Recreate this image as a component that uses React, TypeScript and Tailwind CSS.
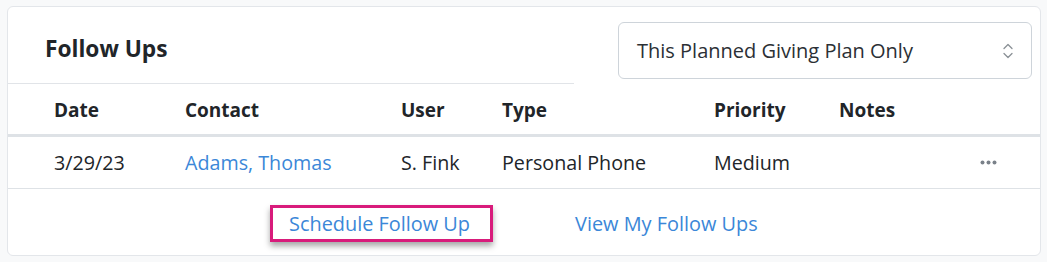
import React from 'react';

const font = { fontFamily: '"Open Sans", "Noto Sans", Arial, sans-serif' };

const App = () => {
  return (
    <div className="w-[1047px] h-[262px] bg-[#f8f9fa] pt-[6px] pl-[7px]" style={font}>
      <div className="w-[1034px] h-[250px] bg-white border border-[#e3e6ea] rounded-[6px] flex flex-col text-[#212529]">
        {/* Header */}
        <div className="flex h-[77px]">
          <div className="w-[566px] border-b border-[#e1e4e8] flex items-center pl-[37px] pt-[8px]">
            <h2 className="font-bold text-[22.7px]">Follow Ups</h2>
          </div>
          <div className="flex-1 pl-[44px] pr-[8px] pt-[15px]">
            <div className="h-[57px] border border-[#ced4da] rounded-[6px] flex items-center justify-between pl-[18px] pr-[18px] pt-[1px]">
              <span className="text-[20px] text-[#2b3035]">This Planned Giving Plan Only</span>
              <svg width="10" height="16" viewBox="0 0 10 16" fill="none" stroke="#8a9096" strokeWidth="1.3" strokeLinecap="round" strokeLinejoin="round">
                <path d="M1 5.5 L5 1.5 L9 5.5" />
                <path d="M1 10.5 L5 14.5 L9 10.5" />
              </svg>
            </div>
          </div>
        </div>

        {/* Table header */}
        <div className="grid grid-cols-[131px_216px_101px_212px_125px_1fr] pl-[46px] h-[53px] items-center border-b-[3px] border-[#dee2e6] font-bold text-[19px] pt-[2px]">
          <div>Date</div>
          <div>Contact</div>
          <div>User</div>
          <div>Type</div>
          <div>Priority</div>
          <div>Notes</div>
        </div>

        {/* Row */}
        <div className="grid grid-cols-[131px_216px_101px_212px_125px_1fr] pl-[46px] h-[52px] items-center border-b border-[#dee2e6] text-[19.7px]">
          <div>3/29/23</div>
          <div className="text-[#3b87d8]">Adams, Thomas</div>
          <div>S. Fink</div>
          <div>Personal Phone</div>
          <div>Medium</div>
          <div className="flex justify-end pr-[43px]">
            <svg width="17" height="5" viewBox="0 0 17 5" fill="#7a8189">
              <circle cx="2.5" cy="2.5" r="2" />
              <circle cx="8.5" cy="2.5" r="2" />
              <circle cx="14.5" cy="2.5" r="2" />
            </svg>
          </div>
        </div>

        {/* Footer */}
        <div className="flex items-start pl-[262px] pt-[16px] text-[19.9px] text-[#3b87d8]">
          <div className="border-[3px] border-[#d81b7b] pl-[16px] pr-[20px] h-[37px] flex items-center shadow-[0_4px_6px_rgba(0,0,0,0.35)]">
            Schedule Follow Up
          </div>
          <div className="ml-[82px] h-[37px] flex items-center">View My Follow Ups</div>
        </div>
      </div>
    </div>
  );
};

export default App;
